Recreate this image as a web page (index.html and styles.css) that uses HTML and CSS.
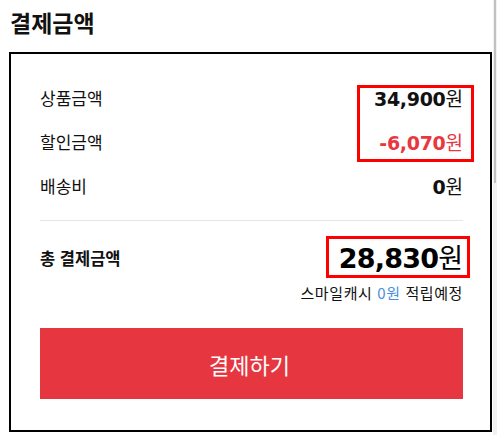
FILE: index.html
```html
<!DOCTYPE html>
<html lang="ko">
<head>
<meta charset="utf-8">
<title>결제금액</title>
<link rel="stylesheet" href="styles.css">
</head>
<body>
<div class="page">
  <h2 class="title">결제금액</h2>
  <section class="card">
    <div class="rows">
      <div class="row"><span class="label">상품금액</span><span class="value"><b class="num">34,900</b>원</span></div>
      <div class="row"><span class="label">할인금액</span><span class="value discount"><b class="num">-6,070</b>원</span></div>
      <div class="row"><span class="label">배송비</span><span class="value"><b class="num">0</b>원</span></div>
    </div>
    <div class="total">
      <div class="total-row"><span class="total-label">총 결제금액</span><span class="total-value"><b class="num">28,830</b>원</span></div>
      <p class="cash">스마일캐시 <span class="cash-amount">0원</span> 적립예정</p>
    </div>
    <button class="pay">결제하기</button>
    <div class="mark mark-items"></div>
    <div class="mark mark-total"></div>
  </section>
</div>
<div class="scrollbar"><div class="thumb"></div></div>
</body>
</html>
```
FILE: styles.css
```css
html, body {
  margin: 0;
  padding: 0;
  background: #fff;
}
body {
  font-family: "Noto Sans CJK KR", "Noto Sans", sans-serif;
  color: #111;
}
.page {
  padding: 0 5px 0 9px;
}
.title {
  margin: 0;
  padding: 7px 0 0 1px;
  height: 52px;
  box-sizing: border-box;
  font-size: 23px;
  line-height: 30px;
  font-weight: 700;
  color: #111;
}
.card {
  position: relative;
  border: 2px solid #000;
  padding: 22px 27px 31px 29px;
  height: 380px;
  box-sizing: border-box;
}
.rows {
  display: flex;
  flex-direction: column;
  border-bottom: 1px solid #e6e6e6;
  padding-bottom: 12px;
}
.row {
  display: flex;
  justify-content: space-between;
  align-items: center;
  height: 44px;
}
.label {
  font-size: 17px;
  line-height: 20px;
}
.value {
  font-size: 19px;
  line-height: 24px;
  color: #111;
}
.num {
  font-family: "DejaVu Sans", sans-serif;
  font-weight: 700;
  letter-spacing: -0.3px;
}
.discount {
  color: #e8373f;
}
.total {
  padding-top: 17px;
}
.total-row {
  display: flex;
  justify-content: space-between;
  align-items: center;
  height: 40px;
}
.total-label {
  font-size: 16.5px;
  font-weight: 700;
  line-height: 20px;
}
.total-value {
  font-size: 27px;
  line-height: 36px;
  color: #000;
}
.total-value .num {
  letter-spacing: -0.8px;
}
.cash {
  margin: 6px 0 0;
  text-align: right;
  font-size: 15px;
  line-height: 18px;
  letter-spacing: 0.6px;
  color: #111;
}
.cash-amount {
  color: #4a8fe0;
}
.pay {
  display: block;
  width: 100%;
  height: 71px;
  margin-top: 26px;
  border: 0;
  background: #e63741;
  color: #fff;
  font-family: "Noto Sans CJK KR", "Noto Sans", sans-serif;
  font-size: 22px;
  padding: 0 4px 0 0;
}
.mark {
  position: absolute;
  border: 3px solid #ff0000;
  box-sizing: border-box;
}
.mark-items {
  left: 346px;
  top: 31px;
  width: 117px;
  height: 77px;
}
.mark-total {
  left: 315px;
  top: 182px;
  width: 144px;
  height: 42px;
}
.scrollbar {
  position: fixed;
  top: 0;
  right: 0;
  width: 4px;
  height: 100%;
  background: #f1f1f1;
}
.thumb {
  margin-left: 1px;
  width: 2px;
  height: 183px;
  background: #c1c1c1;
}
```
